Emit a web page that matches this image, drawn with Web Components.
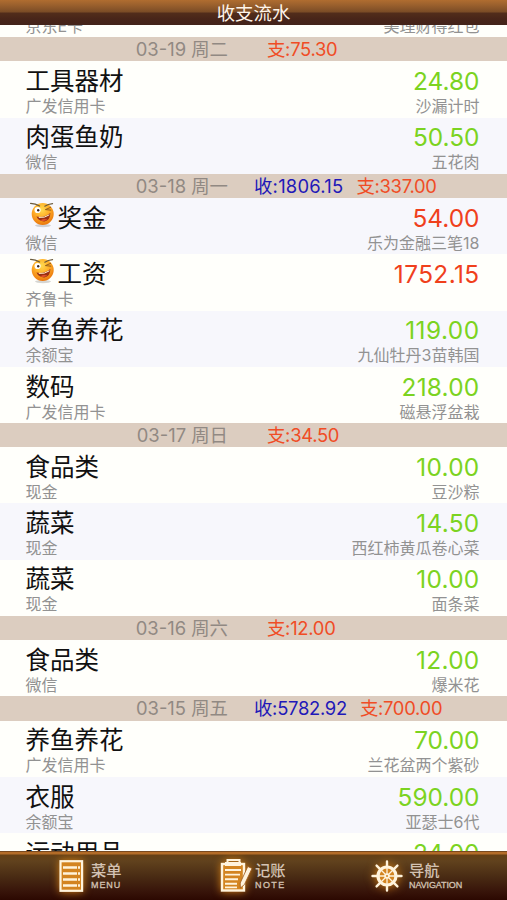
<!DOCTYPE html>
<html lang="zh-CN">
<head>
<meta charset="utf-8">
<title>收支流水</title>
<style>
    html, body {
        margin: 0;
        height: 100%;
        overflow: hidden;
        font-family: Inter, "Noto Sans CJK SC", sans-serif;
        background: #fffffb;
    }
</style>
</head>
<body>
<account-book></account-book>

<script>
const days = [
    {date: '', rows: [
        {name: '', amount: '', account: '京东E卡', note: '美理财得红包'}
    ]},
    {date: '03-19 周二', expense: '75.30', rows: [
        {name: '工具器材', amount: '24.80', account: '广发信用卡', note: '沙漏计时'},
        {name: '肉蛋鱼奶', amount: '50.50', account: '微信', note: '五花肉', alt: true}
    ]},
    {date: '03-18 周一', income: '1806.15', expense: '337.00', rows: [
        {name: '奖金', amount: '54.00', account: '微信', note: '乐为金融三笔18', income: true, alt: true},
        {name: '工资', amount: '1752.15', account: '齐鲁卡', note: '', income: true},
        {name: '养鱼养花', amount: '119.00', account: '余额宝', note: '九仙牡丹3苗韩国', alt: true},
        {name: '数码', amount: '218.00', account: '广发信用卡', note: '磁悬浮盆栽'}
    ]},
    {date: '03-17 周日', expense: '34.50', rows: [
        {name: '食品类', amount: '10.00', account: '现金', note: '豆沙粽'},
        {name: '蔬菜', amount: '14.50', account: '现金', note: '西红柿黄瓜卷心菜', alt: true},
        {name: '蔬菜', amount: '10.00', account: '现金', note: '面条菜'}
    ]},
    {date: '03-16 周六', expense: '12.00', rows: [
        {name: '食品类', amount: '12.00', account: '微信', note: '爆米花'}
    ]},
    {date: '03-15 周五', income: '5782.92', expense: '700.00', rows: [
        {name: '养鱼养花', amount: '70.00', account: '广发信用卡', note: '兰花盆两个紫砂'},
        {name: '衣服', amount: '590.00', account: '余额宝', note: '亚瑟士6代', alt: true},
        {name: '运动用品', amount: '24.00', account: '', note: ''}
    ]}
];

// the figure 1 is narrow in Inter, give numbers that use it a little more room
function figureSpacing(text, extra) {
    const ones = text.split('1').length - 1;
    return text ? (ones * extra / text.length).toFixed(2) : 0;
}

class TitleBar extends HTMLElement {
    constructor() {
        super();
        const shadow = this.attachShadow({mode: 'open'});
        shadow.innerHTML = `
            <style>
                :host {
                    display: flex;
                    justify-content: center;
                    align-items: center;
                    height: 25px;
                    box-sizing: border-box;
                    padding-top: 2px;
                    color: #fff5ea;
                    font-size: 18.4px;
                    line-height: 23px;
                    background: linear-gradient(#b06d30 0, #9a602d 5px, #7b4c26 12px, #522d1b 13px, #482519 19px, #43231a 25px);
                }
            </style>
            <slot></slot>
        `;
    }
}

class WinkFace extends HTMLElement {
    constructor() {
        super();
        const shadow = this.attachShadow({mode: 'open'});
        shadow.innerHTML = `
            <style>
                :host { display: block; width: 32px; height: 28px; }
                svg { display: block; }
            </style>
            <svg width="32" height="28" viewBox="0 0 32 28">
                <defs>
                    <radialGradient id="skin" cx=".45" cy=".3" r=".7">
                        <stop offset="0" stop-color="#ffdc52"/>
                        <stop offset=".5" stop-color="#ffae27"/>
                        <stop offset="1" stop-color="#ea760c"/>
                    </radialGradient>
                </defs>
                <ellipse cx="17" cy="24.6" rx="8" ry="1.6" fill="#000" opacity=".16"/>
                <circle cx="16.7" cy="13" r="11" fill="url(#skin)"/>
                <path d="M4.6 2.4 Q9.6 2.6 13.6 5" fill="none" stroke="#6b5a3c" stroke-width="1.2" stroke-linecap="round"/>
                <path d="M18.8 5.2 Q22 3 26.6 2.6" fill="none" stroke="#6b5a3c" stroke-width="1.1" stroke-linecap="round"/>
                <circle cx="11.6" cy="9" r="3.1" fill="#fff"/>
                <circle cx="12.2" cy="9.2" r="1.2" fill="#3b2a22"/>
                <path d="M25 6.2 L19.4 8.6 L25.2 9.2" fill="none" stroke="#8b5516" stroke-width=".9"/>
                <path d="M10.4 15.6 Q18 17 24.4 12 Q24.2 19.6 18.4 20.4 Q12.8 20.6 10.4 15.6Z" fill="#9b2f12"/>
                <path d="M12.8 16.4 Q18.5 17.2 23.4 13.8" fill="none" stroke="#fff1cf" stroke-width="1"/>
                <path d="M14.5 19.2 Q18 17.2 21.4 18.6 Q18 21.2 14.5 19.2Z" fill="#e5512b"/>
            </svg>
        `;
    }
}

class DayHeader extends HTMLElement {
    connectedCallback() {
        const income = this.getAttribute('income');
        const expense = this.getAttribute('expense');
        const shadow = this.attachShadow({mode: 'open'});
        shadow.innerHTML = `
            <style>
                :host {
                    display: flex;
                    height: 24.3px;
                    line-height: 24.3px;
                    font-size: 18.4px;
                    white-space: nowrap;
                    background: #dccdc0;
                }
                .date { width: 228px; text-align: right; color: #918983; margin-right: 26px; }
                .income { color: #2118b8; letter-spacing: calc(-.28px + ${figureSpacing(income, 1.8)}px); }
                .expense { color: #f04c25; margin-left: 13px; letter-spacing: -.28px; }
            </style>
            <span class="date"><slot></slot></span>
            ${income ? `<span class="income">收:${income}</span>` : ''}
            ${expense ? `<span class="expense">支:${expense}</span>` : ''}
        `;
    }
}

class FlowRow extends HTMLElement {
    connectedCallback() {
        const shadow = this.attachShadow({mode: 'open'});
        shadow.innerHTML = `
            <style>
                :host {
                    display: grid;
                    grid-template-columns: auto auto;
                    grid-template-rows: 35px 16px;
                    justify-content: space-between;
                    height: 56.2px;
                    box-sizing: border-box;
                    padding: 1.8px 27.5px 0 25.5px;
                    background: #fffffb;
                    white-space: nowrap;
                }
                :host([alt]) { background: #f7f7fc; }
                .name { display: flex; font-size: 24.5px; line-height: 37px; color: #111; }
                .amount { font-size: 24.4px; line-height: 37px; text-align: right; color: #7bd321; }
                :host([income]) .amount { color: #f0401c; }
                .small { font-size: 16px; line-height: 16px; color: #929292; }
                .note { text-align: right; }
                wink-face { margin-top: 1px; }
            </style>
            <div class="name">${this.hasAttribute('income') ? '<wink-face></wink-face>' : ''}<slot name="name"></slot></div>
            <div class="amount"><slot name="amount"></slot></div>
            <div class="small"><slot name="account"></slot></div>
            <div class="small note"><slot name="note"></slot></div>
        `;
    }
}

class FlowList extends HTMLElement {
    constructor() {
        super();
        const shadow = this.attachShadow({mode: 'open'});
        shadow.innerHTML = `
            <style>
                :host { display: block; overflow: hidden; }
                .scroll { margin-top: -44px; }
            </style>
            <div class="scroll">${days.map(day => this.renderDay(day)).join('')}</div>
        `;
    }

    renderDay(day) {
        const header = day.date
            ? `<day-header income="${day.income || ''}" expense="${day.expense || ''}">${day.date}</day-header>`
            : '';
        return header + day.rows.map(row => `
            <flow-row ${row.alt ? 'alt' : ''} ${row.income ? 'income' : ''}>
                <span slot="name">${row.name}</span>
                <span slot="amount" style="letter-spacing: ${figureSpacing(row.amount, 1.4)}px">${row.amount}</span>
                <span slot="account">${row.account}</span>
                <span slot="note">${row.note}</span>
            </flow-row>`).join('');
    }
}

const tabIcons = {
    menu: `
        <rect x="5" y="5" width="22" height="30" fill="#d38420"/>
        <g fill="none" stroke="#fff3dc">
            <rect x="5.5" y="5.2" width="21.6" height="29.6" stroke-width="2.2"/>
            <path d="M8 11.5h17M8 17.5h17M8 23.5h17M8 29.5h17" stroke-width="2.4"/>
            <path d="M22.5 8v25" stroke="#d38420" stroke-width="1"/>
        </g>`,
    note: `
        <rect x="5" y="8" width="23" height="27" fill="#d38420"/>
        <g fill="none" stroke="#fff3dc">
            <rect x="6" y="8" width="22" height="26.5" stroke-width="2.4"/>
            <path d="M11.5 7V4h12v3" stroke-width="2"/>
            <path d="M9 8h16" stroke-width="4"/>
            <path d="M9 14h16M9 18.6h15M9 23.2h13M9 27.8h12M9 31.4h12" stroke-width="1.9"/>
        </g>
        <path d="M31.8 10.5 L36 12.4 L28.4 28.6 L24.4 32 L24.2 27Z" fill="#fff3dc" stroke="#9b5718" stroke-width=".8"/>`,
    helm: `
        <circle cx="20" cy="20" r="9" fill="#d38420"/>
        <g fill="none" stroke="#fff3dc" stroke-linecap="round">
            <circle cx="20" cy="20" r="9" stroke-width="3.2"/>
            <path d="M20 5.5v5M20 29.5v5M5.5 20h5M29.5 20h5M9.6 9.6l4 4M26.4 26.4l4 4M9.6 30.4l4-4M26.4 13.6l4-4" stroke-width="2.4"/>
            <path d="M20 12v16M12 20h16M14.3 14.3l11.4 11.4M14.3 25.7l11.4-11.4" stroke-width="1.3"/>
        </g>
        <circle cx="20" cy="20" r="2.8" fill="#fff3dc"/>
        <circle cx="20" cy="20" r="1" fill="#d38420"/>`
};

class TabItem extends HTMLElement {
    connectedCallback() {
        const shadow = this.attachShadow({mode: 'open'});
        shadow.innerHTML = `
            <style>
                :host { display: flex; color: #d3c2b3; }
                svg {
                    width: 40px;
                    height: 40px;
                    overflow: visible;
                    filter: drop-shadow(0 0 4px #d17d14);
                }
                .label { display: flex; flex-direction: column; margin-left: var(--label-gap, 0); padding-top: 6px; }
                .cn { font-size: 15.3px; line-height: 18px; font-weight: 500; }
                .en {
                    font-family: "Liberation Sans", sans-serif;
                    font-size: 9px;
                    line-height: 10px;
                    letter-spacing: var(--en-spacing, 0);
                    -webkit-text-stroke: .3px;
                }
            </style>
            <svg viewBox="0 0 40 40">${tabIcons[this.getAttribute('icon')]}</svg>
            <div class="label">
                <span class="cn"><slot></slot></span>
                <span class="en">${this.getAttribute('en')}</span>
            </div>
        `;
    }
}

class TabBar extends HTMLElement {
    constructor() {
        super();
        const shadow = this.attachShadow({mode: 'open'});
        shadow.innerHTML = `
            <style>
                :host {
                    display: grid;
                    grid-template-columns: 161px 151px 1fr;
                    padding: 5px 0 0 55px;
                    height: 49px;
                    box-sizing: border-box;
                    background: linear-gradient(#7a4a20 0, #7a4a20 1px, #b36c28 1px, #b36c28 3px, #654015 4px, #61421d 10px, #4a2c14 25px, #38150a 40px, #2c0801 49px);
                }
                .menu { --label-gap: -4px; --en-spacing: .9px; }
                .note { --label-gap: -1px; --en-spacing: 1.4px; }
                .nav { --label-gap: 2px; --en-spacing: -.1px; }
            </style>
            <tab-item class="menu" icon="menu" en="MENU">菜单</tab-item>
            <tab-item class="note" icon="note" en="NOTE">记账</tab-item>
            <tab-item class="nav" icon="helm" en="NAVIGATION">导航</tab-item>
        `;
    }
}

class AccountBook extends HTMLElement {
    constructor() {
        super();
        const shadow = this.attachShadow({mode: 'open'});
        shadow.innerHTML = `
            <style>
                :host {
                    display: grid;
                    grid-template-rows: 25px minmax(0, 1fr) 49px;
                    height: 100vh;
                }
            </style>
            <title-bar>收支流水</title-bar>
            <flow-list></flow-list>
            <tab-bar></tab-bar>
        `;
    }
}

customElements.define('title-bar', TitleBar);
customElements.define('wink-face', WinkFace);
customElements.define('day-header', DayHeader);
customElements.define('flow-row', FlowRow);
customElements.define('flow-list', FlowList);
customElements.define('tab-item', TabItem);
customElements.define('tab-bar', TabBar);
customElements.define('account-book', AccountBook);
</script>
</body>
</html>
